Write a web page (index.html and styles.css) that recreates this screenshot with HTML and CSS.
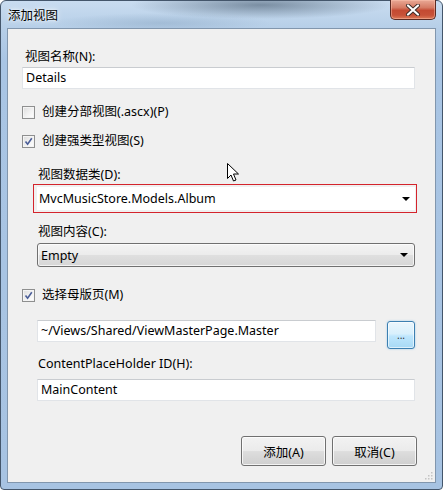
FILE: index.html
```html
<!DOCTYPE html>
<html lang="zh-CN">
<head>
<meta charset="utf-8">
<title>添加视图</title>
<link rel="stylesheet" href="styles.css">
</head>
<body>
<div class="window">
  <div class="titlebar">
    <span class="title">添加视图</span>
    <div class="close">
      <svg width="16" height="12" viewBox="0 0 16 12"><path d="M3 1.5 L13 10.5 M13 1.5 L3 10.5" stroke="#3b2a26" stroke-width="4" stroke-linecap="round"/><path d="M3 1.5 L13 10.5 M13 1.5 L3 10.5" stroke="#fff" stroke-width="2.2" stroke-linecap="round"/></svg>
    </div>
  </div>
  <div class="client">
    <div class="label first">视图名称(N):</div>
    <div class="textbox wide">Details</div>

    <div class="check-row row1"><span class="checkbox"></span><span>创建分部视图(.ascx)(P)</span></div>
    <div class="check-row row2"><span class="checkbox checked"><svg width="9" height="9" viewBox="0 0 9 9"><path d="M1.5 4.5 L3.6 7.2 L7.8 1.2" fill="none" stroke="#4b5e98" stroke-width="1.6"/></svg></span><span>创建强类型视图(S)</span></div>

    <div class="indent">
      <div class="label l-data">视图数据类(D):</div>
      <div class="highlight">
        <div class="combo edit">
          <span>MvcMusicStore.Models.Album</span>
          <span class="arrow"></span>
        </div>
      </div>
      <div class="label l-content">视图内容(C):</div>
      <div class="combo dropdown">
        <span>Empty</span>
        <span class="arrow"></span>
      </div>
    </div>

    <div class="check-row row3"><span class="checkbox checked"><svg width="9" height="9" viewBox="0 0 9 9"><path d="M1.5 4.5 L3.6 7.2 L7.8 1.2" fill="none" stroke="#4b5e98" stroke-width="1.6"/></svg></span><span>选择母版页(M)</span></div>

    <div class="indent">
      <div class="master-row">
        <div class="textbox master">~/Views/Shared/ViewMasterPage.Master</div>
        <div class="browse">...</div>
      </div>
      <div class="label l-cph">ContentPlaceHolder ID(H):</div>
      <div class="textbox cph">MainContent</div>
    </div>

    <div class="buttons">
      <div class="btn">添加(A)</div>
      <div class="btn">取消(C)</div>
    </div>

    <svg class="grip" width="9" height="9" viewBox="0 0 9 9">
      <rect x="7" y="1" width="1.5" height="1.5" fill="#c4c4c4"/>
      <rect x="4" y="4" width="1.5" height="1.5" fill="#c4c4c4"/>
      <rect x="7" y="4" width="1.5" height="1.5" fill="#c4c4c4"/>
      <rect x="1" y="7" width="1.5" height="1.5" fill="#c4c4c4"/>
      <rect x="4" y="7" width="1.5" height="1.5" fill="#c4c4c4"/>
      <rect x="7" y="7" width="1.5" height="1.5" fill="#c4c4c4"/>
    </svg>

    <svg class="cursor" width="13" height="20" viewBox="0 0 13 20">
      <path d="M0.5 0.5 L0.5 15.5 L4 12 L6.5 18 L9 17 L6.5 11 L11.5 11 Z" fill="#fff" stroke="#000" stroke-width="1" stroke-linejoin="miter"/>
    </svg>
  </div>
</div>
</body>
</html>
```

FILE: styles.css
```css
* { box-sizing: border-box; }
html, body { margin: 0; padding: 0; }
body {
  width: 443px;
  height: 490px;
  overflow: hidden;
  font-family: "Noto Sans", "Noto Sans CJK SC", sans-serif;
  font-size: 12.5px;
  color: #000;
  background: #fff;
}
.window {
  position: relative;
  width: 443px;
  height: 490px;
  display: flex;
  flex-direction: column;
  border: 1px solid #44566b;
  border-radius: 6px 6px 4px 4px;
  background:
    radial-gradient(ellipse 130px 14px at 260px 4px, rgba(60,80,100,0.55), rgba(60,80,100,0) 100%),
    radial-gradient(ellipse 110px 10px at 160px 22px, rgba(120,150,180,0.35), rgba(120,150,180,0) 100%),
    linear-gradient(180deg, #c9dcf0 0px, #b7cfe8 26px, #a9c5e4 60px, #a7c3e2 100%);
  padding: 0 6px 6px 6px;
}
.titlebar {
  height: 27px;
  display: flex;
  align-items: flex-start;
  position: relative;
}
.title {
  margin-top: 6px;
  margin-left: 1px;
  font-size: 12.5px;
  line-height: 17px;
  color: #000;
  text-shadow: 0 0 6px rgba(255,255,255,0.9), 0 0 3px rgba(255,255,255,0.9);
}
.close {
  position: absolute;
  right: 0;
  top: -1px;
  width: 46px;
  height: 20px;
  border: 1px solid #5a2a22;
  border-top: none;
  border-radius: 0 0 5px 5px;
  background: linear-gradient(180deg, #e9a996 0%, #d57b64 40%, #c44a32 55%, #c75238 80%, #dd7a58 100%);
  box-shadow: inset 0 0 0 1px rgba(255,200,180,0.45);
  display: flex;
  align-items: center;
  justify-content: center;
}
.client {
  position: relative;
  flex: 1;
  background: #f0f0f0;
  border: 1px solid #8196ad;
  padding: 0 0 0 14px;
  display: flex;
  flex-direction: column;
  align-items: flex-start;
}
.label {
  line-height: 16px;
  height: 16px;
  white-space: nowrap;
}
.label.first { margin-top: 20px; margin-left: 3px; }
.textbox {
  height: 22px;
  background: #fff;
  border: 1px solid #e1e4e8;
  border-top-color: #c9ccd0;
  line-height: 20px;
  padding-left: 3px;
  white-space: nowrap;
}
.textbox.wide { width: 393px; margin-top: 2px; }
.check-row {
  display: flex;
  align-items: center;
  gap: 7px;
  height: 16px;
  line-height: 16px;
}
.row1 { margin-top: 15px; }
.row2 { margin-top: 13px; }
.row3 { margin-top: 20px; }
.checkbox {
  width: 13px;
  height: 13px;
  border: 1px solid #8e8f8f;
  background: linear-gradient(135deg, #dcdcdc 0%, #f4f4f4 60%, #ffffff 100%);
  box-shadow: inset 0 0 0 1px #f4f4f4;
  display: flex;
  align-items: center;
  justify-content: center;
}
.indent {
  display: flex;
  flex-direction: column;
  align-items: flex-start;
  margin-left: 15px;
}
.l-data { margin-top: 18px; margin-left: 1px; }
.highlight {
  margin-top: 1px;
  margin-left: -4px;
  width: 384px;
  height: 29px;
  border: 1px solid #d4242c;
  padding: 2px 1px 2px 3px;
}
.combo {
  display: flex;
  align-items: center;
  justify-content: space-between;
  white-space: nowrap;
}
.combo.edit {
  height: 23px;
  background: #fff;
  padding: 0 5px 0 2px;
}
.arrow {
  width: 0;
  height: 0;
  border-left: 4px solid transparent;
  border-right: 4px solid transparent;
  border-top: 4px solid #000;
}
.l-content { margin-top: 11px; margin-left: 1px; }
.combo.dropdown {
  margin-top: 3px;
  width: 378px;
  height: 24px;
  border: 1px solid #707070;
  border-radius: 3px;
  background: linear-gradient(180deg, #f4f4f4 0%, #ececec 48%, #dfdfdf 52%, #d6d6d6 100%);
  box-shadow: inset 0 0 0 1px rgba(255,255,255,0.7);
  padding: 0 6px 0 3px;
}
.master-row {
  display: flex;
  align-items: flex-start;
  gap: 11px;
  margin-top: 17px;
}
.textbox.master { width: 339px; }
.browse {
  margin-top: 1px;
  width: 28px;
  height: 28px;
  border: 1px solid #3c7fb1;
  border-radius: 3px;
  background: linear-gradient(180deg, #eaf6fd 0%, #d9f0fc 45%, #bee6fd 55%, #a7d9f5 100%);
  box-shadow: inset 0 0 0 1px rgba(255,255,255,0.6), 0 0 2px rgba(90,170,230,0.6);
  font-size: 10px;
  line-height: 10px;
  padding-top: 8px;
  text-align: center;
  color: #333;
  letter-spacing: 0;
}
.l-cph { margin-top: 7px; margin-left: 1px; }
.textbox.cph { width: 378px; margin-top: 7px; }
.buttons {
  display: flex;
  gap: 6px;
  margin-top: 35px;
  margin-left: 219px;
}
.btn {
  width: 85px;
  height: 30px;
  border: 1px solid #707070;
  border-radius: 3px;
  background: linear-gradient(180deg, #f2f2f2 0%, #ebebeb 48%, #dddddd 52%, #cfcfcf 100%);
  box-shadow: inset 0 0 0 1px rgba(255,255,255,0.75);
  display: flex;
  align-items: center;
  justify-content: center;
}
.grip {
  position: absolute;
  right: 2px;
  bottom: 2px;
}
.cursor {
  position: absolute;
  left: 219px;
  top: 134px;
}
```
